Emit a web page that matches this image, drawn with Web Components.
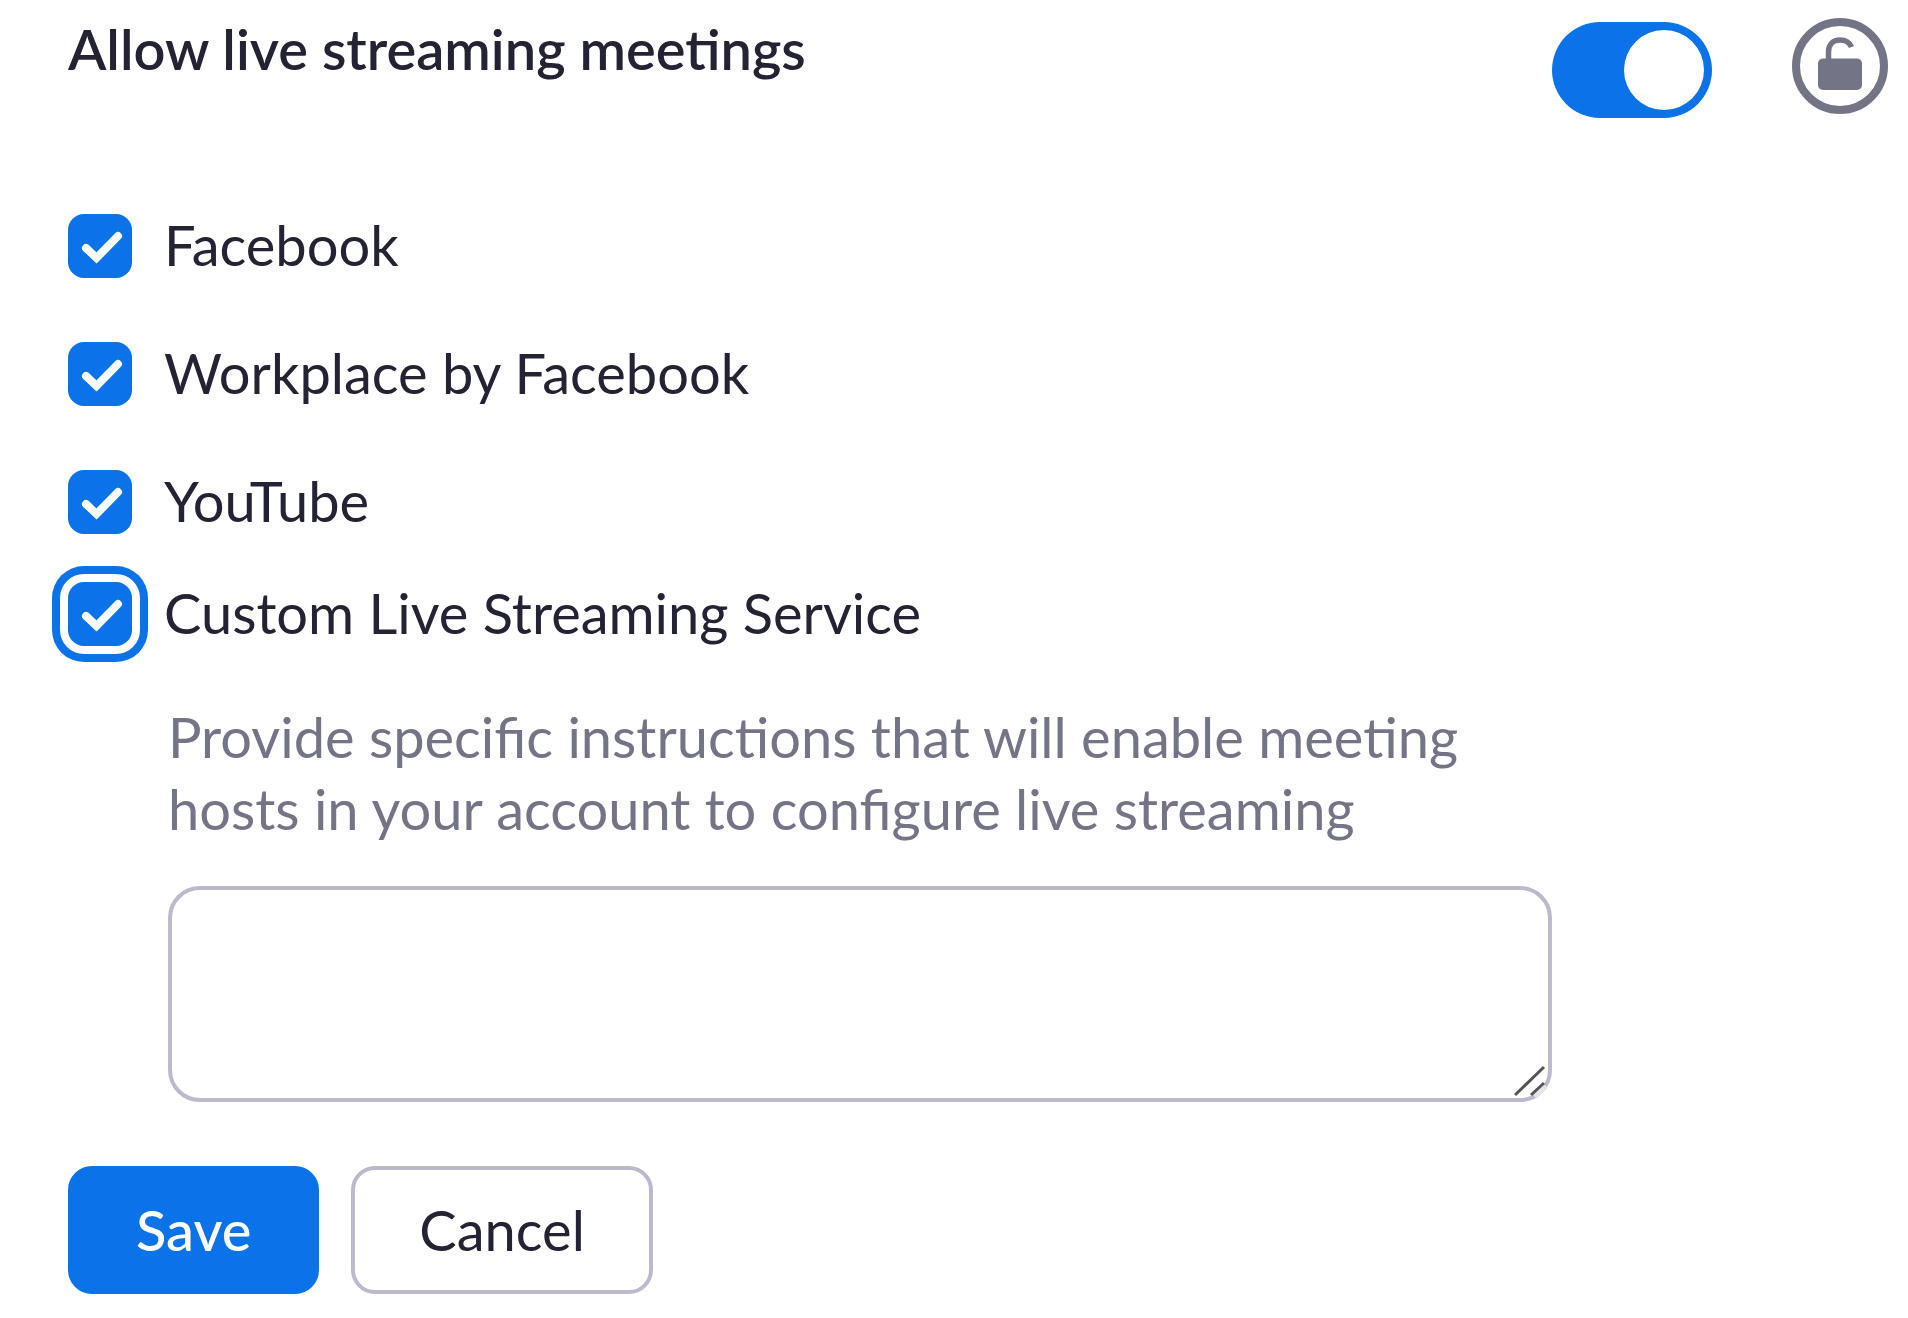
<!DOCTYPE html>
<html lang="en">
<head>
<meta charset="utf-8">
<title>Live streaming settings</title>
<style>
  body {
    margin: 0;
    background: #fff;
    color: #232333;
    font: 400 56px/72px Lato, "Open Sans", sans-serif;
    --blue: #0b72e7;
    --gray: #747487;
    --line: #babacc;
  }
</style>
</head>
<body>
<live-stream-settings></live-stream-settings>

<script>
// Attaches an open shadow root filled with the given markup
const render = (element, html) => {
  const template = document.createElement('template');
  template.innerHTML = html;
  element.attachShadow({ mode: 'open' });
  element.shadowRoot.appendChild(template.content.cloneNode(true));
};

class ToggleSwitch extends HTMLElement {
  constructor() {
    super();
    render(this, `
      <style>
        :host {
          display: block;
        }

        input {
          appearance: none;
          display: flex;
          box-sizing: border-box;
          width: 160px;
          height: 96px;
          margin: 0;
          padding: 8px;
          border-radius: 48px;
          background: var(--line);
          cursor: pointer;
        }

        input::before {
          content: "";
          width: 80px;
          height: 80px;
          border-radius: 50%;
          background: #fff;
        }

        input:checked {
          justify-content: flex-end;
          background: var(--blue);
        }
      </style>
      <input type="checkbox" role="switch">
    `);
    const input = this.shadowRoot.querySelector('input');
    input.checked = this.hasAttribute('checked');
    input.setAttribute('aria-label', this.getAttribute('label') || '');
  }
}

class LockButton extends HTMLElement {
  constructor() {
    super();
    render(this, `
      <style>
        :host {
          display: block;
        }

        button {
          display: block;
          box-sizing: border-box;
          width: 96px;
          height: 96px;
          padding: 0;
          border: 8px solid var(--gray);
          border-radius: 50%;
          background: #fff;
          color: var(--gray);
          cursor: pointer;
        }

        svg {
          display: block;
        }
      </style>
      <button type="button" aria-label="Lock setting">
        <svg width="80" height="80" viewBox="0 0 80 80" aria-hidden="true">
          <rect x="18" y="32.500" width="44" height="31.500" rx="5" fill="currentColor"/>
          <path d="M28.500 34V26C28.500 18.500 33 14 40 14C45.500 14 49.500 16.500 51.500 21"
            fill="none" stroke="currentColor" stroke-width="5.500"/>
        </svg>
      </button>
    `);
  }
}

class CheckOption extends HTMLElement {
  constructor() {
    super();
    render(this, `
      <style>
        :host {
          display: flex;
        }

        label {
          display: flex;
          gap: 32px;
          cursor: pointer;
        }

        .box {
          display: grid;
          flex: none;
          height: 64px;
          margin-top: 5px;
        }

        input,
        svg {
          grid-area: 1 / 1;
        }

        input {
          appearance: none;
          box-sizing: border-box;
          width: 64px;
          height: 64px;
          margin: 0;
          border: 4px solid var(--line);
          border-radius: 16px;
          outline: none;
        }

        input:checked {
          border-color: var(--blue);
          background: var(--blue);
        }

        :host([active]) input,
        input:focus-visible {
          box-shadow: 0 0 0 8px #fff, 0 0 0 16px var(--blue);
        }

        svg {
          visibility: hidden;
          pointer-events: none;
        }

        input:checked + svg {
          visibility: visible;
        }
      </style>
      <label>
        <span class="box">
          <input type="checkbox">
          <svg width="64" height="64" viewBox="0 0 64 64" aria-hidden="true">
            <path d="M18 34L28.500 44L50 22" fill="none" stroke="#fff" stroke-width="8" stroke-linecap="round"/>
          </svg>
        </span>
        <span><slot></slot></span>
      </label>
    `);
    this.shadowRoot.querySelector('input').checked = this.hasAttribute('checked');
  }
}

class InstructionsField extends HTMLElement {
  constructor() {
    super();
    render(this, `
      <style>
        :host {
          display: flex;
          flex-direction: column;
          gap: 41px;
        }

        label {
          color: var(--gray);
        }

        .area {
          display: grid;
        }

        textarea,
        svg {
          grid-area: 1 / 1;
        }

        textarea {
          box-sizing: border-box;
          width: 100%;
          height: 216px;
          padding: 16px 32px;
          border: 4px solid var(--line);
          border-radius: 32px;
          outline: none;
          background: #fff;
          color: inherit;
          font: inherit;
          resize: none;
        }

        svg {
          place-self: end;
          margin: 4px;
          pointer-events: none;
        }
      </style>
      <label for="instructions"><slot></slot></label>
      <div class="area">
        <textarea id="instructions"></textarea>
        <svg width="34" height="34" viewBox="0 0 34 34" aria-hidden="true">
          <path d="M21 33L32 22" stroke="#e4e4ea" stroke-width="5"/>
          <path d="M1 31L30 3M17 31L30 19" stroke="#555" stroke-width="3"/>
        </svg>
      </div>
    `);
  }
}

class ActionButton extends HTMLElement {
  constructor() {
    super();
    render(this, `
      <style>
        :host {
          display: block;
        }

        button {
          display: block;
          padding: 24px 64px;
          border: 4px solid var(--line);
          border-radius: 24px;
          background: #fff;
          color: inherit;
          font: inherit;
          cursor: pointer;
        }

        :host([primary]) button {
          border-color: var(--blue);
          background: var(--blue);
          color: #fff;
          font-weight: 500;
        }
      </style>
      <button type="button"><slot></slot></button>
    `);
  }
}

class LiveStreamSettings extends HTMLElement {
  constructor() {
    super();
    render(this, `
      <style>
        :host {
          display: block;
          padding: 13px 20px 24px 68px;
        }

        header {
          display: flex;
          justify-content: space-between;
          align-items: flex-start;
        }

        h1 {
          margin: 0;
          font-size: 56px;
          font-weight: 600;
        }

        .controls {
          display: flex;
          align-items: flex-start;
          gap: 80px;
          padding-top: 5px;
        }

        toggle-switch {
          padding-top: 4px;
        }

        .options {
          display: flex;
          flex-direction: column;
          gap: 56px;
          margin-top: 91px;
        }

        .custom {
          display: flex;
          flex-direction: column;
          gap: 52px;
          margin-top: 40px;
        }

        instructions-field {
          margin: 0 336px 0 100px;
        }

        footer {
          display: flex;
          gap: 32px;
          margin-top: 64px;
        }
      </style>
      <header>
        <h1>Allow live streaming meetings</h1>
        <div class="controls">
          <toggle-switch checked label="Allow live streaming meetings"></toggle-switch>
          <lock-button></lock-button>
        </div>
      </header>
      <div class="options">
        <check-option checked>Facebook</check-option>
        <check-option checked>Workplace by Facebook</check-option>
        <check-option checked>YouTube</check-option>
      </div>
      <div class="custom">
        <check-option checked active>Custom Live Streaming Service</check-option>
        <instructions-field>Provide specific instructions that will enable meeting hosts in your account to configure live streaming</instructions-field>
      </div>
      <footer>
        <action-button primary>Save</action-button>
        <action-button>Cancel</action-button>
      </footer>
    `);
  }
}

customElements.define('toggle-switch', ToggleSwitch);
customElements.define('lock-button', LockButton);
customElements.define('check-option', CheckOption);
customElements.define('instructions-field', InstructionsField);
customElements.define('action-button', ActionButton);
customElements.define('live-stream-settings', LiveStreamSettings);
</script>
</body>
</html>
